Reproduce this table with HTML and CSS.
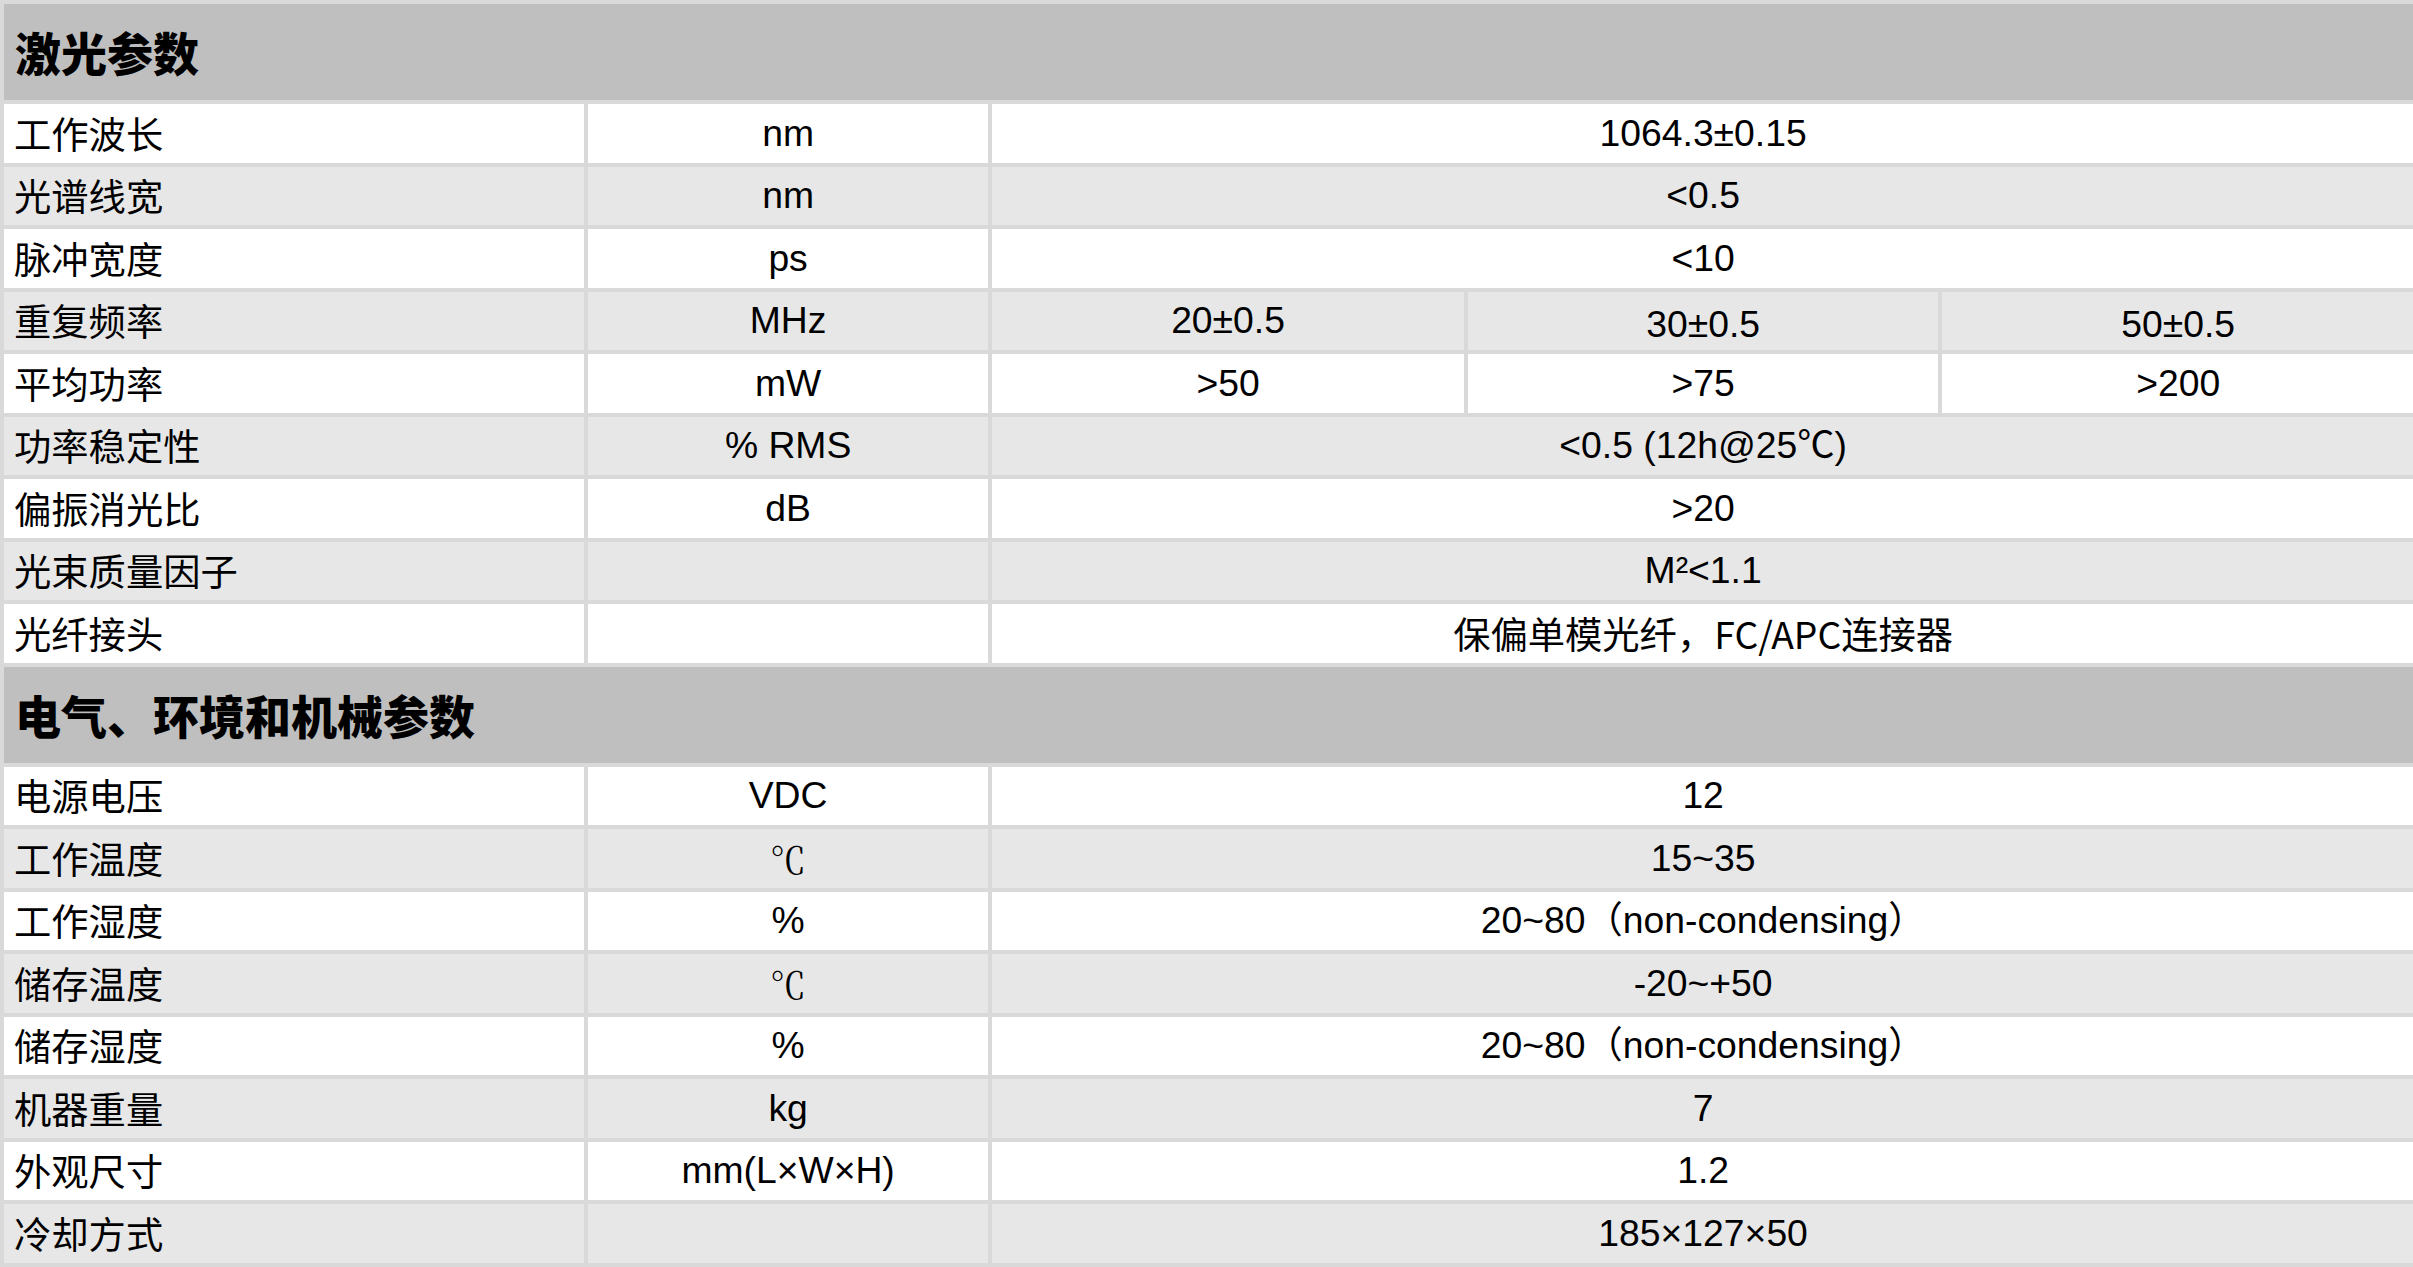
FILE: index.html
```html
<!DOCTYPE html>
<html lang="zh-CN">
<head>
<meta charset="utf-8">
<title>激光参数</title>
<link rel="stylesheet" href="styles.css">
</head>
<body>
<table class="spec">
  <colgroup>
    <col class="c-name">
    <col class="c-unit">
    <col class="c-v1">
    <col class="c-v2">
    <col class="c-v3">
  </colgroup>
  <tbody>
    <tr class="section"><th colspan="5">激光参数</th></tr>
    <tr class="odd"><td class="name">工作波长</td><td class="unit">nm</td><td class="val" colspan="3">1064.3±0.15</td></tr>
    <tr class="even"><td class="name">光谱线宽</td><td class="unit">nm</td><td class="val" colspan="3">&lt;0.5</td></tr>
    <tr class="odd"><td class="name">脉冲宽度</td><td class="unit">ps</td><td class="val" colspan="3">&lt;10</td></tr>
    <tr class="even"><td class="name">重复频率</td><td class="unit">MHz</td><td class="val">20±0.5</td><td class="val low">30±0.5</td><td class="val low">50±0.5</td></tr>
    <tr class="odd"><td class="name">平均功率</td><td class="unit">mW</td><td class="val">&gt;50</td><td class="val">&gt;75</td><td class="val">&gt;200</td></tr>
    <tr class="even"><td class="name">功率稳定性</td><td class="unit">% RMS</td><td class="val" colspan="3">&lt;0.5 (12h@25℃)</td></tr>
    <tr class="odd"><td class="name">偏振消光比</td><td class="unit">dB</td><td class="val" colspan="3">&gt;20</td></tr>
    <tr class="even"><td class="name">光束质量因子</td><td class="unit"></td><td class="val" colspan="3">M²&lt;1.1</td></tr>
    <tr class="odd"><td class="name">光纤接头</td><td class="unit"></td><td class="val cjk" colspan="3">保偏单模光纤，FC/APC连接器</td></tr>
    <tr class="section"><th colspan="5">电气、环境和机械参数</th></tr>
    <tr class="odd"><td class="name">电源电压</td><td class="unit">VDC</td><td class="val" colspan="3">12</td></tr>
    <tr class="even"><td class="name">工作温度</td><td class="unit serif">℃</td><td class="val" colspan="3">15~35</td></tr>
    <tr class="odd"><td class="name">工作湿度</td><td class="unit">%</td><td class="val" colspan="3">20~80（non-condensing）</td></tr>
    <tr class="even"><td class="name">储存温度</td><td class="unit serif">℃</td><td class="val" colspan="3">-20~+50</td></tr>
    <tr class="odd"><td class="name">储存湿度</td><td class="unit">%</td><td class="val" colspan="3">20~80（non-condensing）</td></tr>
    <tr class="even"><td class="name">机器重量</td><td class="unit">kg</td><td class="val" colspan="3">7</td></tr>
    <tr class="odd"><td class="name">外观尺寸</td><td class="unit">mm(L×W×H)</td><td class="val" colspan="3">1.2</td></tr>
    <tr class="even"><td class="name">冷却方式</td><td class="unit"></td><td class="val" colspan="3">185×127×50</td></tr>
  </tbody>
</table>
</body>
</html>
```
FILE: styles.css
```css
html, body {
  margin: 0;
  padding: 0;
  background: #ffffff;
  overflow: hidden;
}

.spec {
  table-layout: fixed;
  width: 2418px;
  border-collapse: separate;
  border-spacing: 4px;
  background: #d9d9d9;
  color: #000000;
  font-family: "Liberation Sans", Arial, "Noto Sans CJK SC", sans-serif;
  font-size: 37.3px;
}

.c-name { width: 578px; }
.c-unit { width: 399px; }
.c-v1 { width: 470px; }
.c-v2 { width: 469px; }
.c-v3 { width: 470px; }

.spec td,
.spec th {
  padding: 0;
  vertical-align: middle;
  line-height: 1.2;
  white-space: nowrap;
}

.spec .section th {
  height: 96px;
  background: #bfbfbf;
  text-align: left;
  padding-left: 11px;
  font-family: "Noto Sans CJK SC", sans-serif;
  font-weight: 900;
  font-size: 46px;
}

.spec td {
  height: 58.5px;
}

.odd td { background: #ffffff; }
.even td { background: #e7e7e7; }

.spec td.name {
  text-align: left;
  padding-left: 10px;
  font-family: "Noto Sans CJK SC", sans-serif;
}

.spec td.unit,
.spec td.val {
  text-align: center;
}

.spec td.low {
  padding-top: 7px;
  height: 51.5px;
}

.spec td.cjk {
  font-family: "Noto Sans CJK SC", sans-serif;
}

.spec td.serif {
  font-family: "Noto Serif CJK SC", "Noto Serif", "DejaVu Serif", "Liberation Serif", serif;
  font-size: 36px;
}
```
